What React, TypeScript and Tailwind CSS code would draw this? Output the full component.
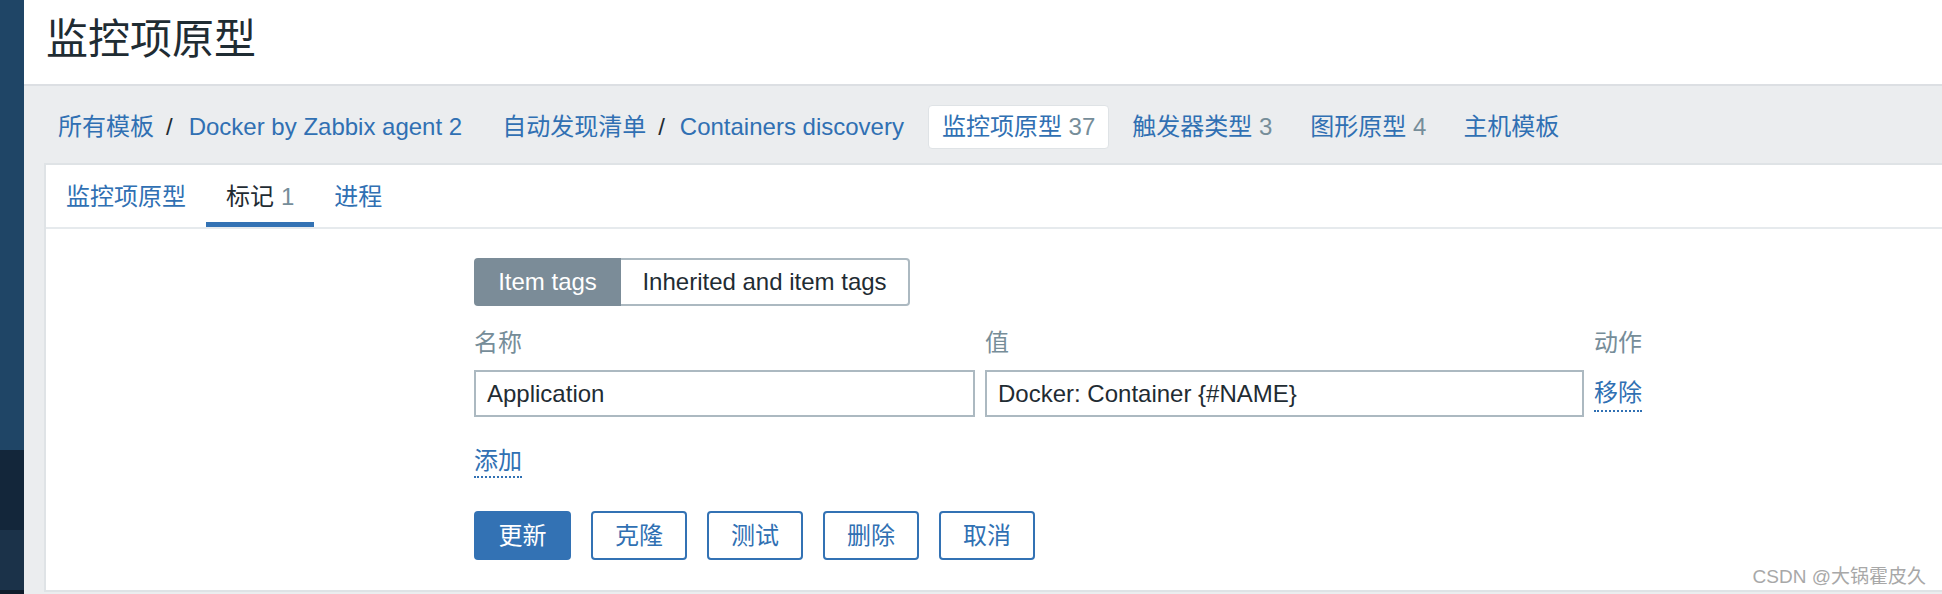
import React from "react";

const FONT = '"Liberation Sans", "Noto Sans CJK SC", sans-serif';

function Crumb({ children, className = "" }: { children: React.ReactNode; className?: string }) {
  return <span className={"whitespace-nowrap text-[#3070b3] " + className}>{children}</span>;
}

export default function App() {
  return (
    <div
      className="relative flex h-[594px] w-[1942px] overflow-hidden bg-[#ebedef] text-[24px]"
      style={{ fontFamily: FONT }}
    >
      {/* sidebar */}
      <div className="flex w-[24px] shrink-0 flex-col">
        <div className="h-[450px] bg-[#1f4566]" />
        <div className="h-[80px] bg-[#13263a]" />
        <div className="h-[60px] bg-[#1b3249]" />
        <div className="flex-1 bg-[#0f1c2a]" />
      </div>

      {/* main */}
      <div className="flex min-w-0 flex-1 flex-col">
        <div className="flex h-[84px] shrink-0 items-center bg-white pb-[5px] pl-[22px]">
          <h1 className="text-[42px] font-normal leading-[48px] text-[#1f2c33]">监控项原型</h1>
        </div>
        <div className="h-[2px] shrink-0 bg-[#dcdfe3]" />

        {/* breadcrumbs */}
        <div className="flex h-[77px] shrink-0 items-center pl-[34px] pt-[5px] leading-[30px]">
          <Crumb>所有模板</Crumb>
          <span className="ml-[12px] text-[#1f2c33]">/</span>
          <Crumb className="ml-[16px]">Docker by Zabbix agent 2</Crumb>
          <Crumb className="ml-[40px]">自动发现清单</Crumb>
          <span className="ml-[12px] text-[#1f2c33]">/</span>
          <Crumb className="ml-[15px]">Containers discovery</Crumb>
          <div className="ml-[24px] flex h-[44px] items-center rounded-[4px] border border-[#dfe3e6] bg-white px-[13px]">
            <Crumb>
              监控项原型 <span className="text-[#768d99]">37</span>
            </Crumb>
          </div>
          <Crumb className="ml-[23px]">
            触发器类型 <span className="text-[#768d99]">3</span>
          </Crumb>
          <Crumb className="ml-[38px]">
            图形原型 <span className="text-[#768d99]">4</span>
          </Crumb>
          <Crumb className="ml-[37px]">主机模板</Crumb>
        </div>

        {/* panel */}
        <div className="ml-[20px] flex flex-col border-2 border-r-0 border-[#dfe3e6] bg-white">
          {/* tabs */}
          <div className="flex h-[64px] items-stretch border-b-2 border-[#e6eaed] leading-[30px]">
            <div className="flex items-center px-[20px] pt-[1px] text-[#3070b3]">监控项原型</div>
            <div className="flex items-center border-b-[5px] border-[#3372b4] px-[20px] pt-[6px] text-[#1f2c33]">
              标记 <span className="ml-[7px] text-[#768d99]">1</span>
            </div>
            <div className="flex items-center px-[20px] pt-[1px] text-[#3070b3]">进程</div>
          </div>

          {/* form */}
          <div className="flex flex-col items-start pb-[30px] pl-[428px] pt-[29px]">
            <div className="flex h-[48px] leading-[30px]">
              <div className="flex w-[147px] items-center justify-center rounded-l-[4px] bg-[#7b8c98] text-white">
                Item tags
              </div>
              <div className="flex w-[289px] items-center justify-center rounded-r-[4px] border-2 border-l-0 border-[#acb9c1] text-[#1f2c33]">
                Inherited and item tags
              </div>
            </div>

            <div className="mt-[22px] flex h-[30px] leading-[30px] text-[#768d99]">
              <div className="w-[511px]">名称</div>
              <div className="w-[609px]">值</div>
              <div>动作</div>
            </div>

            <div className="mt-[12px] flex">
              <div className="flex h-[47px] w-[501px] items-center border-2 border-[#acb9c1] pl-[11px] text-[#1f2c33]">
                Application
              </div>
              <div className="ml-[10px] flex h-[47px] w-[599px] items-center border-2 border-[#acb9c1] pl-[11px] text-[#1f2c33]">
                Docker: Container {"{#NAME}"}
              </div>
              <span className="ml-[10px] mt-[8px] self-start border-b-2 border-dotted border-[#3070b3] pb-[2px] leading-[30px] text-[#3070b3]">
                移除
              </span>
            </div>

            <span className="mt-[29px] border-b-2 border-dotted border-[#3070b3] leading-[30px] text-[#3070b3]">
              添加
            </span>

            <div className="mt-[33px] flex gap-[20px]">
              <button className="h-[49px] w-[97px] rounded-[4px] bg-[#3372b4] leading-[30px] text-white">
                更新
              </button>
              {["克隆", "测试", "删除", "取消"].map((t) => (
                <button
                  key={t}
                  className="h-[49px] w-[96px] rounded-[4px] border-2 border-[#3372b4] bg-white leading-[30px] text-[#3070b3]"
                >
                  {t}
                </button>
              ))}
            </div>
          </div>
        </div>
      </div>

      {/* watermark */}
      <div className="pointer-events-none absolute bottom-[5px] right-[16px] text-[19px] leading-[24px] text-[#a8a8a8]">
        CSDN @大锅霍皮久
      </div>
    </div>
  );
}
